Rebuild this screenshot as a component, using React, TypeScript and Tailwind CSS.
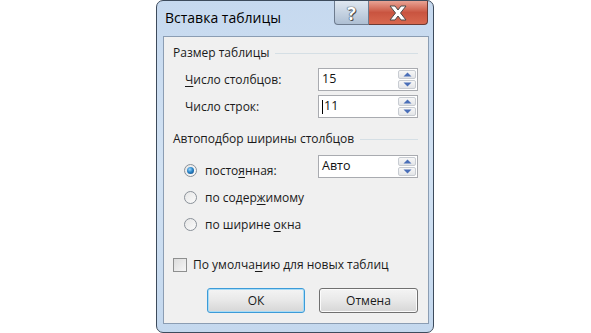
import React from "react";

const font = { fontFamily: '"Open Sans", "Noto Sans", sans-serif' };

function Arrow({ up }: { up?: boolean }) {
  return (
    <svg width="9" height="5" viewBox="0 0 9 5">
      {up ? (
        <path d="M0.5 4.5 L4.5 0.5 L8.5 4.5 Z" fill="#4a6fb8" />
      ) : (
        <path d="M0.5 0.5 L4.5 4.5 L8.5 0.5 Z" fill="#4a6fb8" />
      )}
    </svg>
  );
}

function Spin({ value, caret }: { value: string; caret?: boolean }) {
  return (
    <div className="flex h-[23px] w-[100px] border border-[#a9abb0] bg-white">
      <div className="flex flex-1 items-center pl-[3px] text-[12.5px] text-[#111]">
        {caret && <span className="mr-[1px] h-[14px] w-[1px] bg-black" />}
        {value}
      </div>
      <div className="flex w-[19px] flex-col gap-[1px] py-[1px] pr-[1px]">
        <div className="flex flex-1 items-center justify-center rounded-[2px] border border-[#c8ccd2] bg-gradient-to-b from-[#f7f7f7] to-[#e3e5e8]">
          <Arrow up />
        </div>
        <div className="flex flex-1 items-center justify-center rounded-[2px] border border-[#c8ccd2] bg-gradient-to-b from-[#f7f7f7] to-[#e3e5e8]">
          <Arrow />
        </div>
      </div>
    </div>
  );
}

function GroupTitle({ children }: { children: React.ReactNode }) {
  return (
    <div className="flex h-[16px] items-center gap-[6px] pl-[9px] pr-[10px] text-[12px] leading-[16px]">
      <span className="whitespace-nowrap">{children}</span>
      <div className="h-[1px] flex-1 bg-[#d5dfe5]" />
    </div>
  );
}

function Radio({ checked }: { checked?: boolean }) {
  return (
    <div className="flex h-[13px] w-[13px] items-center justify-center rounded-full border border-[#8a9199] bg-gradient-to-br from-[#e6e6e6] to-[#fbfbfb]">
      {checked && (
        <div className="h-[7px] w-[7px] rounded-full bg-[radial-gradient(circle_at_40%_35%,#9fd8ff_0%,#2b86c8_45%,#0f3f78_100%)]" />
      )}
    </div>
  );
}

function RadioRow({ label, checked }: { label: [string, string, string]; checked?: boolean }) {
  return (
    <div className="flex h-[27px] items-center pl-[20px]">
      <Radio checked={checked} />
      <span className="ml-[8px] text-[12px]">
        {label[0]}
        <span className="underline underline-offset-2">{label[1]}</span>
        {label[2]}
      </span>
    </div>
  );
}

export default function App() {
  return (
    <div className="h-[333px] w-[591px] overflow-hidden bg-white pl-[156px] text-[#1a1a1a]" style={font}>
      <div className="flex h-[333px] w-[278px] flex-col rounded-[7px] border border-[#3d4b5c] bg-gradient-to-b from-[#c6d9ef] via-[#d2e2f3] to-[#c4d8ee]">
        {/* title bar */}
        <div className="flex h-[35px] items-start justify-between">
          <div className="pl-[8px] pt-[7px] text-[14px] leading-[20px] text-black">Вставка таблицы</div>
          <div className="mr-[5px] flex h-[24px]">
            <div className="flex w-[35px] items-center justify-center rounded-bl-[4px] border border-t-0 border-[#6d7b8e] bg-gradient-to-b from-[#dfe7f0] via-[#c6d3e2] to-[#aebfd3] text-[18px] font-bold leading-none text-white [text-shadow:0_0_1px_#333,0_0_1px_#333,1px_1px_0_#555]">
              ?
            </div>
            <div className="flex w-[59px] items-center justify-center rounded-br-[4px] border border-l-0 border-t-0 border-[#6d3a33] bg-gradient-to-b from-[#e8a294] via-[#c95440] to-[#d8684f]">
              <svg width="22" height="16" viewBox="0 0 22 16">
                <path
                  d="M3 1 H8 L11 5 L14 1 H19 L13.5 8 L19 15 H14 L11 11 L8 15 H3 L8.5 8 Z"
                  fill="#fff"
                  stroke="#4b4b4b"
                  strokeWidth="1"
                  strokeLinejoin="round"
                />
              </svg>
            </div>
          </div>
        </div>

        {/* content */}
        <div className="ml-[6px] mr-[4px] flex h-[288px] flex-col border border-[#8b9db3] bg-[#f0f0f0]">
          <div className="mt-[8px]">
            <GroupTitle>Размер таблицы</GroupTitle>
          </div>
          <div className="mt-[7px] flex items-center justify-between pl-[21px] pr-[10px]">
            <span className="text-[12px]">
              <span className="underline underline-offset-2">Ч</span>исло столбцов:
            </span>
            <Spin value="15" />
          </div>
          <div className="mt-[4px] flex items-center justify-between pl-[21px] pr-[10px]">
            <span className="text-[12px]">Число строк:</span>
            <Spin value="11" caret />
          </div>
          <div className="mt-[13px]">
            <GroupTitle>Автоподбор ширины столбцов</GroupTitle>
          </div>
          <div className="mt-[8px] flex items-start justify-between pr-[10px]">
            <div className="pt-[2px]">
              <RadioRow label={["посто", "я", "нная:"]} checked />
            </div>
            <Spin value="Авто" />
          </div>
          <RadioRow label={["по содер", "ж", "имому"]} />
          <RadioRow label={["по ширине ", "о", "кна"]} />

          <div className="mt-[19px] flex h-[16px] items-center pl-[9px]">
            <div className="h-[14px] w-[14px] border border-[#8e8f8f] bg-gradient-to-br from-[#dcdcdc] to-[#f6f6f6]" />
            <span className="ml-[6px] text-[12px]">
              По умолча<span className="underline underline-offset-2">н</span>ию для новых таблиц
            </span>
          </div>

          <div className="mt-[15px] flex justify-end gap-[14px] pr-[10px]">
            <div className="flex h-[25px] w-[98px] items-center justify-center rounded-[3px] border border-[#3c9bd8] bg-gradient-to-b from-[#f4f4f4] via-[#e8e8e8] to-[#d6d6d6] text-[12px] shadow-[inset_0_0_0_1px_#a9dcf6]">
              ОК
            </div>
            <div className="flex h-[25px] w-[99px] items-center justify-center rounded-[3px] border border-[#707070] bg-gradient-to-b from-[#f4f4f4] via-[#e8e8e8] to-[#d6d6d6] text-[12px] shadow-[inset_0_0_0_1px_#fbfbfb]">
              Отмена
            </div>
          </div>
        </div>
      </div>
    </div>
  );
}
